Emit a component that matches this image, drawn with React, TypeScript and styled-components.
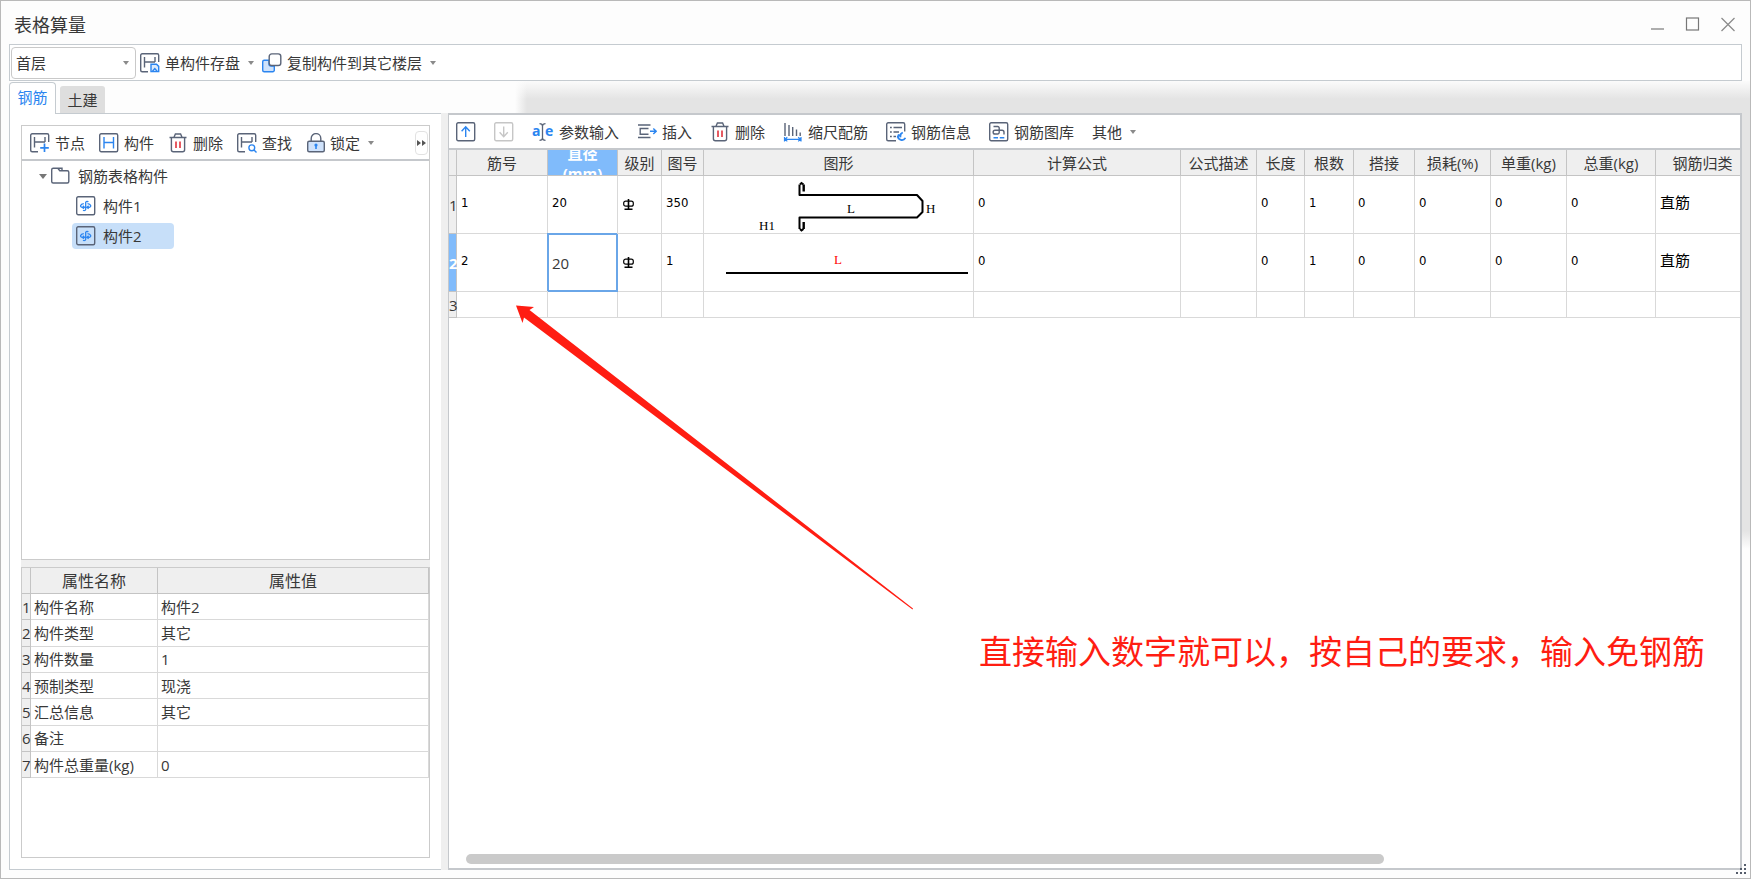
import React, { useState } from "react";
import styled, { createGlobalStyle, css } from "styled-components";

const ui = `"Open Sans", "Noto Sans CJK SC", sans-serif`;
const mono = `"DejaVu Sans Condensed", "Noto Sans CJK SC", sans-serif`;
const INK = "#5a6478";
const BLUE = "#2b85f0";

const GlobalStyle = createGlobalStyle`
  *, *::before, *::after { box-sizing: border-box; }
  body { margin: 0; background: #fff; }
  button, select, input { font: inherit; color: inherit; }
`;

const Window = styled.div`
  position: relative;
  display: flex;
  flex-direction: column;
  min-height: 100vh;
  overflow: hidden;
  border: 1px solid #b9b9b9;
  color: #383838;
  font: 15px/20px ${ui};
  background:
    linear-gradient(to bottom, transparent 80px, #e4e4e4 100px, #e4e4e4 530px, transparent 548px) right top / 9px 100% no-repeat,
    #fdfdfd;
`;

const TitleBar = styled.header`
  display: flex;
  align-items: center;
  justify-content: space-between;
  height: 43px;
  padding: 0 14px 0 13px;
  background: #fdfdfd;
`;

const Title = styled.h1`
  margin: 0;
  padding-top: 4px;
  font-size: 18px;
  line-height: 24px;
  font-weight: 400;
`;

const WindowButtons = styled.div`
  display: flex;
  gap: 19px;
  padding-top: 2px;
`;

const PlainButton = styled.button`
  display: flex;
  align-items: center;
  padding: 0;
  border: 0;
  background: none;
  white-space: nowrap;
`;

const MainToolbar = styled.div`
  display: flex;
  align-items: center;
  gap: 8px;
  height: 37px;
  margin: 0 8px;
  padding-left: 1px;
  border: 1px solid #c5cbd0;
  background: #fff;
`;

const FloorPicker = styled.label`
  position: relative;
  display: block;
  width: 125px;
  margin-right: -4px;
  svg { position: absolute; right: 7px; top: 14px; pointer-events: none; }
`;

const FloorSelect = styled.select`
  display: block;
  width: 100%;
  height: 32px;
  padding: 0 4px;
  appearance: none;
  border: 1px solid #c9c9c9;
  border-radius: 4px;
  background: #fff;
`;

const ToolButton = styled(PlainButton)<{ $gap?: number }>`
  gap: ${(p) => p.$gap ?? 5}px;
  > svg { flex: none; }
`;

const TabBar = styled.div`
  display: flex;
  align-items: flex-end;
  height: 32px;
  padding-left: 8px;
`;

const Tab = styled.button<{ $active?: boolean }>`
  position: relative;
  padding: 0;
  ${(p) =>
    p.$active
      ? css`
          z-index: 1;
          width: 47px;
          height: 32px;
          margin-bottom: -1px;
          padding-bottom: 3px;
          border: 1px solid #c5cbd0;
          border-bottom: 0;
          border-radius: 4px 4px 0 0;
          background: #fff;
          color: ${BLUE};
        `
      : css`
          width: 45px;
          height: 27px;
          margin-left: 4px;
          border: 0;
          border-radius: 3px 3px 0 0;
          background: #dedede;
        `}
`;

const TabShade = styled.div`
  flex: 1;
  height: 32px;
  margin-left: 410px;
  background:
    linear-gradient(to right, #fdfdfd, rgba(253, 253, 253, 0) 12px),
    linear-gradient(to bottom, #fbfbfb, #e4e4e4 18px);
`;

const Content = styled.main`
  flex: 1;
  display: flex;
  margin: 0 8px 8px;
  border-left: 1px solid #c5cbd0;
`;

const LeftPane = styled.section`
  flex: none;
  display: flex;
  flex-direction: column;
  width: 431px;
  padding: 11px;
  border-top: 1px solid #c5cbd0;
  border-bottom: 1px solid #c5cbd0;
  background: #fff;
`;

const Splitter = styled.div<{ $horizontal?: boolean }>`
  flex: none;
  ${(p) => (p.$horizontal ? "height: 7px;" : "width: 7px;")}
  background: #efefef;
`;

const TreePanel = styled.div`
  flex: 3 0 0;
  display: flex;
  flex-direction: column;
  border: 1px solid #cbcbcb;
`;

const TreeToolbar = styled.div`
  display: flex;
  align-items: center;
  gap: 14px;
  height: 35px;
  padding: 0 1px 0 8px;
  border-bottom: 2px solid #c5c8cc;
`;

const MoreButton = styled(PlainButton)`
  justify-content: center;
  width: 13px;
  height: 24px;
  margin-left: auto;
  border: 1px solid #e2e2e2;
  border-radius: 4px;
`;

const TreeList = styled.ul`
  margin: 0;
  padding: 0;
  list-style: none;
`;

const TreeRow = styled.li<{ $level: number }>`
  display: flex;
  align-items: center;
  height: 30px;
  padding-left: ${(p) => (p.$level ? 50 : 17)}px;
`;

const TreeItem = styled(PlainButton)<{ $selected?: boolean; $root?: boolean }>`
  gap: ${(p) => (p.$root ? 8 : 7)}px;
  height: 26px;
  width: ${(p) => (p.$root ? "auto" : "102px")};
  padding: 0 ${(p) => (p.$root ? 3 : 4)}px;
  border-radius: 4px;
  background: ${(p) => (p.$selected ? "#c7dff9" : "none")};
`;

const PropertyPanel = styled.div`
  flex: 2 0 0;
  border: 1px solid #cbcbcb;
`;

const PropertyTable = styled.table`
  width: 100%;
  height: 210px;
  table-layout: fixed;
  border-collapse: separate;
  border-spacing: 0;
  th, td {
    height: 26px;
    padding: 0 0 0 3px;
    border: solid #d9d9d9;
    border-width: 0 1px 1px 0;
    font-weight: 400;
    text-align: left;
    white-space: nowrap;
  }
  thead th {
    padding: 0;
    border-color: #c4c4c4;
    background: #efefef;
    font-size: 16px;
    text-align: center;
  }
  tbody th {
    padding: 0;
    border-color: #c4c4c4;
    background: #efefef;
    text-align: center;
  }
`;

const RightPane = styled.section`
  flex: 1;
  min-width: 0;
  display: flex;
  flex-direction: column;
  border: 2px solid #c5c8cc;
  border-left-width: 1px;
  background: #fff;
`;

const GridToolbar = styled.div`
  display: flex;
  align-items: center;
  gap: 18px;
  height: 35px;
  padding-left: 7px;
  border-bottom: 2px solid #c5c8cc;
`;

const GridViewport = styled.div`
  flex: 1;
  overflow: hidden;
`;

const Grid = styled.table`
  width: 1301px;
  table-layout: fixed;
  border-collapse: separate;
  border-spacing: 0;
`;

const HeadCell = styled.th<{ $active?: boolean }>`
  height: 26px;
  padding: 0;
  border: solid #c4c4c4;
  border-width: 0 1px 1px 0;
  background: ${(p) => (p.$active ? "#80bbfb" : "#efefef")};
  color: ${(p) => (p.$active ? "#fff" : "inherit")};
  font-weight: ${(p) => (p.$active ? 700 : 400)};
  white-space: nowrap;
`;

const WrappedLabel = styled.div`
  display: flex;
  align-items: center;
  justify-content: center;
  height: 25px;
  overflow: hidden;
  line-height: 20px;
  white-space: normal;
  text-align: center;
`;

const RowHead = styled.th<{ $active?: boolean }>`
  padding: 0;
  border: solid #c4c4c4;
  border-width: 0 1px 1px 0;
  background: ${(p) => (p.$active ? "#80bbfb" : "#efefef")};
  color: ${(p) => (p.$active ? "#fff" : "inherit")};
  font-weight: ${(p) => (p.$active ? 700 : 400)};
`;

const Cell = styled.td<{ $editing?: boolean; $drawing?: boolean }>`
  padding: ${(p) => (p.$drawing || p.$editing ? "0" : "0 0 3px 4px")};
  border: solid #d9d9d9;
  border-width: 0 1px 1px 0;
  color: #000;
  font: 13px/18px ${mono};
  ${(p) =>
    p.$editing &&
    css`
      border-color: #6aa6e8;
      box-shadow: inset 0 0 0 1px #6aa6e8, -1px -1px 0 #6aa6e8;
    `}
  svg { display: block; }
`;

const Category = styled.span`
  font-size: 15px;
`;

const GridRow = styled.tr<{ $short?: boolean }>`
  height: ${(p) => (p.$short ? 26 : 58)}px;
`;

const CellInput = styled.input`
  display: block;
  width: 100%;
  padding: 0 4px;
  border: 0;
  outline: 0;
  background: none;
  color: #383838;
  font: 15px/20px ${ui};
`;

const ScrollTrack = styled.div`
  height: 14px;
  padding: 0 17px;
`;

const ScrollThumb = styled.div`
  width: 73%;
  height: 10px;
  border-radius: 5px;
  background: #cacaca;
`;

const Arrow = styled.svg`
  position: absolute;
  left: 515px;
  top: 304px;
  pointer-events: none;
`;

const Note = styled.p`
  position: absolute;
  left: 978px;
  top: 629px;
  margin: 0;
  color: #ff1d12;
  font-size: 33px;
  line-height: 44px;
  white-space: nowrap;
`;

const Grip = styled.svg`
  position: absolute;
  right: 2px;
  bottom: 2px;
`;

const Svg = ({ children, size = 20 }: { children: React.ReactNode; size?: number }) => (
  <svg width={size} height={size} viewBox={`0 0 ${size} ${size}`} fill="none" stroke={INK} strokeWidth="1.4" aria-hidden="true">
    {children}
  </svg>
);

const Caret = () => (
  <svg width="6" height="4" viewBox="0 0 6 4" aria-hidden="true">
    <path d="M0 0h6L3 4z" fill="#8a8a8a" />
  </svg>
);

const Frame = () => <rect x="0.7" y="0.7" width="18" height="18" rx="1.5" />;

const CutFrame = () => <path d="M8 18.7H2.2A1.5 1.5 0 0 1 .7 17.2V2.2A1.5 1.5 0 0 1 2.2.7h15a1.5 1.5 0 0 1 1.5 1.5V9" />;

const HMark = () => <path d="M4.5 4v10.5M4.5 9H15M15 4v5" />;

const SaveIcon = () => (
  <Svg>
    <CutFrame />
    <HMark />
    <path d="M11 11.2h5.500l2.200 2.200v5.200H11z" fill="#dcebfd" stroke={BLUE} />
    <path d="m12.500 18.300 2.300-2.800 2.300 2.800" stroke={BLUE} />
  </Svg>
);

const CopyIcon = () => (
  <Svg>
    <path d="M7 7.2H2.2A1.5 1.5 0 0 0 .7 8.7v8.5a1.5 1.5 0 0 0 1.5 1.5h8.6a1.5 1.5 0 0 0 1.5-1.5V13H9a2 2 0 0 1-2-2z" fill="#cfe2fb" stroke={BLUE} />
    <rect x="7.2" y="0.9" width="11.6" height="11.6" rx="2.6" fill="#fff" />
  </Svg>
);

const NodeIcon = () => (
  <Svg>
    <CutFrame />
    <HMark />
    <path d="M14.5 10.5v8.5M10.2 14.8h8.6" stroke={BLUE} strokeWidth="1.7" />
  </Svg>
);

const PartIcon = () => (
  <Svg>
    <Frame />
    <path d="M5 4v11.5M14.5 4v11.5M5 9.5h9.5" stroke={BLUE} />
  </Svg>
);

const TrashIcon = () => (
  <Svg>
    <path d="M1.5 4.5h17M6 4.2 7.4 1h5.2L14 4.2M3.4 4.8v12a2 2 0 0 0 2 2h9.2a2 2 0 0 0 2-2v-12" />
    <path d="M8 8.5v6.5M12 8.5v6.5" stroke="#e0323c" strokeWidth="1.6" />
  </Svg>
);

const FindIcon = () => (
  <Svg>
    <CutFrame />
    <HMark />
    <circle cx="14.8" cy="14.8" r="2.9" stroke={BLUE} />
    <path d="m17 17 2.500 2.500" stroke={BLUE} />
  </Svg>
);

const LockIcon = () => (
  <Svg>
    <path d="M5.2 8.5V5.4a4.8 4.8 0 0 1 9.6 0v3.1" />
    <rect x="1.7" y="8.2" width="16.6" height="10.6" rx="1.5" fill="#cfe2fb" />
    <circle cx="10" cy="12" r="1.6" fill={BLUE} stroke="none" />
    <path d="M10 12v4" stroke={BLUE} strokeWidth="1.6" />
  </Svg>
);

const MoveUpIcon = () => (
  <Svg>
    <Frame />
    <path d="M9.7 15V5M5.6 9.2l4.1-4.4 4.1 4.4" stroke={BLUE} />
  </Svg>
);

const MoveDownIcon = () => (
  <Svg>
    <g stroke="#c6c6c6">
      <Frame />
      <path d="M9.7 4.5v10M5.6 10.3l4.1 4.4 4.1-4.4" />
    </g>
  </Svg>
);

const ParamIcon = () => (
  <svg width="22" height="20" viewBox="0 0 22 20" fill="none" stroke={INK} aria-hidden="true">
    <g fill={BLUE} stroke="none" fontSize="14" fontWeight="700" fontFamily="Open Sans, sans-serif">
      <text x="0" y="14">a</text>
      <text x="13" y="14">e</text>
    </g>
    <path d="M7.500 1.700c1.800 0 3 .900 3 2.300 0-1.400 1.200-2.300 3-2.300M10.500 4v12M7.500 18.300c1.800 0 3-.900 3-2.300 0 1.400 1.200 2.300 3 2.300" strokeWidth="1.300" />
  </svg>
);

const InsertIcon = () => (
  <Svg>
    <path d="M1 3h12.500M1 15.500h12.500M11.500 6.500H3.200v5.700h8.300" />
    <path d="M13 9.300h6M16.300 6.500l2.900 2.800-2.900 2.800" stroke={BLUE} />
  </Svg>
);

const ScaleIcon = () => (
  <Svg>
    <path d="M2 1v13M6 3v11M9.700 5v9M13.500 7.500v6.500M17.200 10.500V14" />
    <path d="M2 17.300h15.500M4.300 15.200 2 17.300l2.300 2.100M15.200 15.200l2.300 2.100-2.300 2.100M1.500 15v4.500M18 15v4.500" stroke={BLUE} strokeWidth="1.200" />
  </Svg>
);

const InfoIcon = () => (
  <Svg>
    <path d="M10 18.700H2.200A1.500 1.500 0 0 1 .700 17.200V2.200A1.500 1.500 0 0 1 2.200.700h15a1.500 1.500 0 0 1 1.500 1.500V9.500M4 5.500h1.800M7.500 5.500H16M4 10h1.800M7.500 10H13M4 14.500h1.800M7.500 14.500H10" />
    <path d="M16.800 10.500c-2.300.800-2.600 3-2.300 4.800M11.800 14a4 4 0 0 0 7.600 1.800M11.500 15.500l1-2.300 2.300 1" stroke={BLUE} strokeWidth="1.800" />
  </Svg>
);

const LibraryIcon = () => (
  <Svg>
    <Frame />
    <path d="M4.500 4.500h4.200a1.500 1.500 0 0 1 1.500 1.500v4.500a1.500 1.500 0 0 1-1.500 1.500H6a1.700 1.700 0 0 1 0-3.700h7a2 2 0 0 1 2 2V12.500" />
    <path d="M4.500 15.700h4.500M10.800 15.700h4.500" stroke={BLUE} />
  </Svg>
);

const FolderIcon = () => (
  <Svg>
    <path d="M1.700 3.700a1.500 1.500 0 0 1 1.500-1.500h4.600l2 2.500h7.500a1.500 1.500 0 0 1 1.500 1.500v9.300a1.500 1.500 0 0 1-1.500 1.500H3.200a1.500 1.500 0 0 1-1.500-1.500zM7.500 2.200H12v2.500" />
  </Svg>
);

const ComponentIcon = () => (
  <Svg>
    <Frame />
    <path d="M12.300 6A1.500 1.500 0 0 0 9.700 6.300v6.900a1.500 1.500 0 0 1-2.600.900M7.800 7.700C4 8 3.800 10.900 6 11.300h2.200M11.500 7.700c3.800.300 4 3.200 1.800 3.600h-1.800M6.800 9.800l1.600 1.500-1.600 1.500M12.600 9.800 11 11.300l1.600 1.500" stroke={BLUE} strokeWidth="1.300" />
  </Svg>
);

const RebarGrade = () => (
  <svg width="14" height="16" viewBox="0 0 14 16" fill="none" stroke="#000" role="img" aria-label="HRB400">
    <rect x="1.700" y="6.200" width="9.600" height="5" rx="2" strokeWidth="1.200" />
    <path d="M6.500 4v10M2.500 14.200h8" strokeWidth="1.600" />
  </svg>
);

const HookedBar = () => (
  <svg width="269" height="57" fill="none" stroke="#000" strokeWidth="2">
    <path d="M95.500 8.500V19H213l5.500 6v11l-5.500 5.500H95.500V53" strokeLinejoin="round" />
    <path d="M99.700 8.500v7M99.700 46v7" strokeWidth="2.400" />
    <path d="M96 8.500 97.500 7 99.500 8.500M96 53l1.500 1.500 2-1.500" />
    <g fill="#000" stroke="none" fontFamily="Liberation Serif, serif" fontSize="13">
      <text x="143" y="37">L</text>
      <text x="222" y="37">H</text>
      <text x="55" y="54">H1</text>
    </g>
  </svg>
);

const StraightBar = () => (
  <svg width="269" height="57">
    <path d="M22 39h242" stroke="#000" strokeWidth="2" />
    <text x="130" y="30" fill="#f00" fontFamily="Liberation Serif, serif" fontSize="13">L</text>
  </svg>
);

const columns: [string, number][] = [
  ["筋号", 91], ["直径(mm)", 70], ["级别", 44], ["图号", 42], ["图形", 270], ["计算公式", 207], ["公式描述", 76],
  ["长度", 48], ["根数", 49], ["搭接", 61], ["损耗(%)", 76], ["单重(kg)", 76], ["总重(kg)", 89], ["钢筋归类", 94],
];

const properties = [
  ["构件名称", "构件2"], ["构件类型", "其它"], ["构件数量", "1"], ["预制类型", "现浇"],
  ["汇总信息", "其它"], ["备注", ""], ["构件总重量(kg)", "0"],
];

const amounts = ["0", "", "0", "1", "0", "0", "0", "0"];

export default function App() {
  const [tab, setTab] = useState("钢筋");
  const [selected, setSelected] = useState("构件2");
  const [diameter, setDiameter] = useState("20");

  return (
    <Window>
      <GlobalStyle />
      <TitleBar>
        <Title>表格算量</Title>
        <WindowButtons>
          <PlainButton aria-label="最小化"><Svg size={16}><path d="M1 13h13" stroke="#8c8c8c" /></Svg></PlainButton>
          <PlainButton aria-label="最大化"><Svg size={16}><rect x="1.500" y="2" width="12" height="12" stroke="#777" strokeWidth="1.200" /></Svg></PlainButton>
          <PlainButton aria-label="关闭"><Svg size={16}><path d="m1.500 2 13 13M14.500 2l-13 13" stroke="#8c8c8c" strokeWidth="1.300" /></Svg></PlainButton>
        </WindowButtons>
      </TitleBar>

      <MainToolbar>
        <FloorPicker>
          <FloorSelect aria-label="楼层" defaultValue="首层">
            <option>首层</option>
          </FloorSelect>
          <Caret />
        </FloorPicker>
        <ToolButton><SaveIcon />单构件存盘</ToolButton>
        <Caret />
        <ToolButton><CopyIcon />复制构件到其它楼层</ToolButton>
        <Caret />
      </MainToolbar>

      <TabBar role="tablist">
        {["钢筋", "土建"].map((name) => (
          <Tab key={name} role="tab" aria-selected={tab === name} $active={tab === name} onClick={() => setTab(name)}>
            {name}
          </Tab>
        ))}
        <TabShade />
      </TabBar>

      <Content>
        <LeftPane>
          <TreePanel>
            <TreeToolbar>
              <ToolButton><NodeIcon />节点</ToolButton>
              <ToolButton><PartIcon />构件</ToolButton>
              <ToolButton><TrashIcon />删除</ToolButton>
              <ToolButton><FindIcon />查找</ToolButton>
              <ToolButton $gap={8}>
                <ToolButton as="span" $gap={4}><LockIcon />锁定</ToolButton>
                <Caret />
              </ToolButton>
              <MoreButton aria-label="更多">
                <svg width="9" height="6" viewBox="0 0 9 6" fill="#555"><path d="M0 0l4 3-4 3zM5 0l4 3-4 3z" /></svg>
              </MoreButton>
            </TreeToolbar>
            <TreeList>
              <TreeRow $level={0}>
                <svg width="8" height="5" viewBox="0 0 8 5" aria-hidden="true"><path d="M0 0h8L4 5z" fill="#777" /></svg>
                <TreeItem $root><FolderIcon />钢筋表格构件</TreeItem>
              </TreeRow>
              {["构件1", "构件2"].map((name) => (
                <TreeRow key={name} $level={1}>
                  <TreeItem $selected={selected === name} onClick={() => setSelected(name)}>
                    <ComponentIcon />{name}
                  </TreeItem>
                </TreeRow>
              ))}
            </TreeList>
          </TreePanel>
          <Splitter $horizontal />
          <PropertyPanel>
            <PropertyTable>
              <colgroup><col width="9" /><col width="127" /><col /></colgroup>
              <thead>
                <tr><th /><th>属性名称</th><th>属性值</th></tr>
              </thead>
              <tbody>
                {properties.map(([name, value], i) => (
                  <tr key={name}><th>{i + 1}</th><td>{name}</td><td>{value}</td></tr>
                ))}
              </tbody>
            </PropertyTable>
          </PropertyPanel>
        </LeftPane>

        <Splitter />

        <RightPane>
          <GridToolbar>
            <ToolButton aria-label="上移"><MoveUpIcon /></ToolButton>
            <ToolButton aria-label="下移" disabled><MoveDownIcon /></ToolButton>
            <ToolButton><ParamIcon />参数输入</ToolButton>
            <ToolButton><InsertIcon />插入</ToolButton>
            <ToolButton><TrashIcon />删除</ToolButton>
            <ToolButton><ScaleIcon />缩尺配筋</ToolButton>
            <ToolButton><InfoIcon />钢筋信息</ToolButton>
            <ToolButton><LibraryIcon />钢筋图库</ToolButton>
            <ToolButton $gap={8}>其他<Caret /></ToolButton>
          </GridToolbar>
          <GridViewport>
            <Grid>
              <colgroup>
                <col width="8" />
                {columns.map(([name, width]) => <col key={name} width={width} />)}
              </colgroup>
              <thead>
                <tr>
                  <HeadCell />
                  {columns.map(([name]) =>
                    name === "直径(mm)" ? (
                      <HeadCell key={name} $active><WrappedLabel>直径<br />(mm)</WrappedLabel></HeadCell>
                    ) : (
                      <HeadCell key={name}>{name}</HeadCell>
                    )
                  )}
                </tr>
              </thead>
              <tbody>
                <GridRow>
                  <RowHead>1</RowHead>
                  <Cell>1</Cell>
                  <Cell>20</Cell>
                  <Cell><RebarGrade /></Cell>
                  <Cell>350</Cell>
                  <Cell $drawing><HookedBar /></Cell>
                  {amounts.map((v, i) => <Cell key={i}>{v}</Cell>)}
                  <Cell><Category>直筋</Category></Cell>
                </GridRow>
                <GridRow>
                  <RowHead $active>2</RowHead>
                  <Cell>2</Cell>
                  <Cell $editing>
                    <CellInput aria-label="直径(mm)" value={diameter} onChange={(e) => setDiameter(e.target.value)} />
                  </Cell>
                  <Cell><RebarGrade /></Cell>
                  <Cell>1</Cell>
                  <Cell $drawing><StraightBar /></Cell>
                  {amounts.map((v, i) => <Cell key={i}>{v}</Cell>)}
                  <Cell><Category>直筋</Category></Cell>
                </GridRow>
                <GridRow $short>
                  <RowHead>3</RowHead>
                  {columns.map(([name]) => <Cell key={name} />)}
                </GridRow>
              </tbody>
            </Grid>
          </GridViewport>
          <ScrollTrack><ScrollThumb /></ScrollTrack>
        </RightPane>
      </Content>

      <Arrow width="399" height="307" viewBox="0 0 399 307" aria-hidden="true">
        <path d="M0 0.500 18 2 13.500 5 397 303.500 396.500 304.500 8 12.500 6.500 18z" fill="#ff1d12" />
      </Arrow>
      <Note>直接输入数字就可以，按自己的要求，输入免钢筋</Note>
      <Grip width="12" height="12" viewBox="0 0 12 12" fill="#555d6b" aria-hidden="true">
        <path d="M8 0h2v2H8zM4 4h2v2H4zM8 4h2v2H8zM0 8h2v2H0zM4 8h2v2H4zM8 8h2v2H8z" />
      </Grip>
    </Window>
  );
}
